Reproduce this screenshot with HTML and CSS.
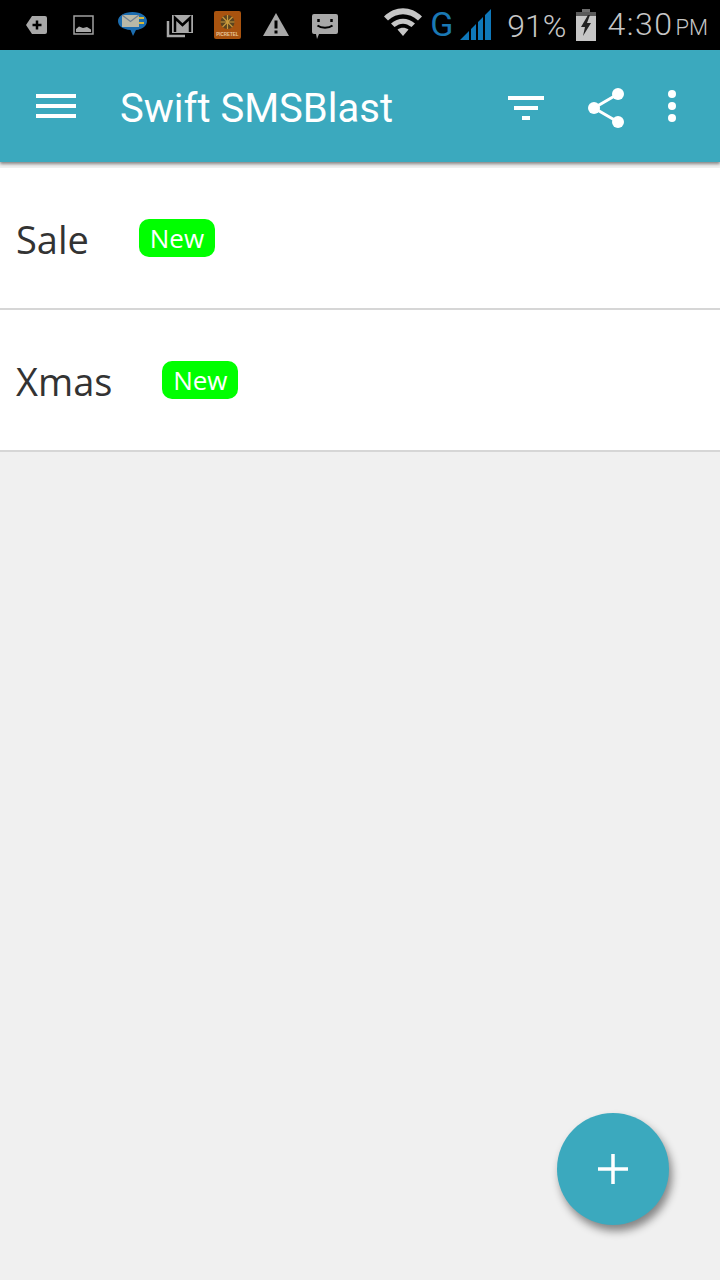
FILE: index.html
```html
<!DOCTYPE html>
<html lang="en">
<head>
    <meta charset="UTF-8">
    <meta name="viewport" content="width=device-width, initial-scale=1.0">
    <title>Swift SMSBlast</title>
    <link rel="stylesheet" href="styles.css">
</head>
<body>
    <div class="phone">
        <div class="status-bar">
            <div class="notifications">
                <svg class="note" viewBox="0 0 32 32">
                    <path d="M12 7H25a2 2 0 0 1 2 2V23a2 2 0 0 1-2 2H12L6 16Z" fill="#a8a8a8"/>
                    <path d="M17 11.500V20.500M12.500 16H21.500" stroke="#000" stroke-width="2.500"/>
                </svg>
                <svg class="note" viewBox="0 0 32 32">
                    <rect x="6" y="7" width="19" height="18" fill="none" stroke="#a0a0a0" stroke-width="1.500"/>
                    <path d="M8 23V20L11 17.500L15 19L19 18L23 20.500V23Z" fill="#a8a8a8"/>
                </svg>
                <svg class="note" viewBox="0 0 32 32">
                    <path d="M17 27L14.500 21C7 20.500 2 17 2 12C2 7 8 3 16.500 3C25 3 31 7 31 12C31 17 26 20.500 20 21Z" fill="#1c6db0"/>
                    <rect x="6" y="6" width="17" height="12" fill="#b9b9a8"/>
                    <path d="M6 6L14.500 12.500L23 6" fill="none" stroke="#6f7f90" stroke-width="1.200"/>
                    <path d="M23 9H28M23 14H28" stroke="#d8b93a" stroke-width="2"/>
                </svg>
                <svg class="note" viewBox="0 0 32 32">
                    <path d="M4 12V27H21" fill="none" stroke="#a8a8a8" stroke-width="2.500"/>
                    <rect x="8" y="6" width="21" height="18" fill="#a8a8a8"/>
                    <path d="M11 23V9L18.500 16L26 9V23" fill="none" stroke="#000" stroke-width="2.500"/>
                </svg>
                <svg class="note" viewBox="0 0 32 32">
                    <rect x="2" y="2" width="27" height="28" rx="2" fill="#a8530f"/>
                    <circle cx="15.500" cy="13" r="7" fill="#5a4420"/>
                    <path d="M15.500 6V20M8.500 13H22.500M10.500 8L20.500 18M20.500 8L10.500 18" stroke="#c99a3c" stroke-width="1.200"/>
                    <text class="note-brand" x="15.500" y="27" text-anchor="middle">PICRETEL</text>
                </svg>
                <svg class="note" viewBox="0 0 32 32">
                    <path d="M16 4L29 27H3Z" fill="#a8a8a8"/>
                    <path d="M16 11.500V19.500M16 21.500V24.500" stroke="#000" stroke-width="3"/>
                </svg>
                <svg class="note" viewBox="0 0 32 32">
                    <path d="M6 5H28a2 2 0 0 1 2 2V23a2 2 0 0 1-2 2H11L9 30L8 25H6a2 2 0 0 1-2-2V7A2 2 0 0 1 6 5Z" fill="#a8a8a8"/>
                    <path d="M10.500 10V13M23.500 10V13" stroke="#000" stroke-width="2.500"/>
                    <path d="M9.500 16.500C13 19.500 21 19.500 24.500 16.500" fill="none" stroke="#000" stroke-width="2"/>
                </svg>
            </div>
            <div class="system">
                <svg class="wifi" viewBox="0 0 40 30">
                    <path d="M1 9.500C12 -1.500 28 -1.500 39 9.500L35 13.500C26 5 14 5 5 13.500Z" fill="#c6c6c6"/>
                    <path d="M8 16.500C15 10 25 10 32 16.500L28.500 20C22.500 15.500 17.500 15.500 11.500 20Z" fill="#c6c6c6"/>
                    <path d="M14.500 22.500C18 20 22 20 25.500 22.500L20 29Z" fill="#c6c6c6"/>
                </svg>
                <span class="net">G</span>
                <svg class="signal" viewBox="0 0 32 31">
                    <path d="M0 31L9 22V31ZM11 31V20L16 15V31ZM18 31V13L23 8V31ZM25 31V6L31 0V31Z" fill="#0f78ba"/>
                </svg>
                <span class="percent">91%</span>
                <svg class="battery" viewBox="0 0 20 32">
                    <rect x="6" y="0" width="8" height="3" fill="#6e6e6e"/>
                    <rect x="0" y="3" width="20" height="7" fill="#5a5a5a"/>
                    <rect x="0" y="7" width="20" height="25" fill="#c6c6c6"/>
                    <path d="M12 6L5 18H9L7 27L15 14H11L14 6Z" fill="#222"/>
                </svg>
                <span class="clock">4:30<small>PM</small></span>
            </div>
        </div>

        <header class="app-bar">
            <svg class="menu-icon" viewBox="0 0 40 24">
                <path d="M0 2H40M0 12H40M0 22H40" stroke="#fff" stroke-width="4"/>
            </svg>
            <div class="title">Swift SMSBlast</div>
            <div class="actions">
                <svg class="action" viewBox="0 0 36 36">
                    <path d="M0 10H36M6 20H30M14 30H22" stroke="#fff" stroke-width="4"/>
                </svg>
                <svg class="action" viewBox="0 0 36 36">
                    <path d="M30 6L6 20L30 34" fill="none" stroke="#fff" stroke-width="3"/>
                    <circle cx="30" cy="6" r="6" fill="#fff"/>
                    <circle cx="6" cy="20" r="6" fill="#fff"/>
                    <circle cx="30" cy="34" r="6" fill="#fff"/>
                </svg>
                <svg class="action-dots" viewBox="0 0 8 36">
                    <circle cx="4" cy="6" r="4" fill="#fff"/>
                    <circle cx="4" cy="18" r="4" fill="#fff"/>
                    <circle cx="4" cy="30" r="4" fill="#fff"/>
                </svg>
            </div>
        </header>

        <div class="list">
            <div class="row">
                <span class="row-name">Sale</span>
                <span class="badge">New</span>
            </div>
            <div class="row">
                <span class="row-name">Xmas</span>
                <span class="badge">New</span>
            </div>
        </div>

        <div class="fab">
            <svg class="fab-icon" viewBox="0 0 30 30">
                <path d="M15 0V30M0 15H30" stroke="#fff" stroke-width="3.500"/>
            </svg>
        </div>
    </div>
</body>
</html>
```

FILE: styles.css
```css
body {
    margin: 0;
    background-color: #f0f0f0;
    font-family: Roboto, sans-serif;
}

.phone {
    width: 720px;
    height: 1280px;
    position: relative;
    overflow: hidden;
    background-color: #f0f0f0;
}

/* status bar */
.status-bar {
    height: 50px;
    background-color: #000;
    display: flex;
    justify-content: space-between;
    align-items: center;
    padding: 0 12px;
    box-sizing: border-box;
}

.notifications {
    display: flex;
    align-items: center;
}

.note {
    width: 32px;
    height: 32px;
    padding: 0 8px;
}

.note-brand {
    font-family: "Liberation Sans", sans-serif;
    font-size: 4.500px;
    font-weight: 700;
    fill: #e8c9a0;
}

.system {
    display: flex;
    align-items: center;
    color: #c6c6c6;
    font-weight: 300;
    font-size: 32px;
    line-height: 50px;
}

.wifi {
    width: 40px;
    height: 30px;
    margin-right: 7px;
    margin-top: -6px;
}

.net {
    color: #1a78b4;
    font-size: 34px;
    font-weight: 400;
    width: 22px;
    margin-right: 8px;
    margin-top: -2px;
}

.signal {
    width: 32px;
    height: 31px;
    margin-right: 15px;
    margin-top: -2px;
}

.percent {
    margin-right: 10px;
    margin-top: 2px;
}

.battery {
    width: 20px;
    height: 32px;
    margin-right: 11px;
    margin-top: -1px;
}

.clock {
    margin-top: 2px;
    letter-spacing: 1.500px;
}

.clock small {
    font-size: 22px;
    margin-left: 2px;
    letter-spacing: 0;
}

/* app bar */
.app-bar {
    height: 112px;
    background-color: #3ba9be;
    box-shadow: 0 2px 3px rgba(0, 0, 0, 0.45);
    display: flex;
    align-items: center;
    padding: 0 44px 0 36px;
    position: relative;
}

.menu-icon {
    width: 40px;
    height: 24px;
    margin-right: 44px;
}

.title {
    color: #fff;
    font-size: 40px;
    flex: 1;
    margin-top: 4px;
}

.actions {
    display: flex;
    align-items: flex-start;
    gap: 44px;
}

.action {
    width: 36px;
    height: 36px;
    overflow: visible;
}

.action-dots {
    width: 8px;
    height: 36px;
}

/* list */
.list {
    padding-top: 6px;
}

.row {
    height: 140px;
    background-color: #fff;
    border-bottom: 2px solid #d6d6d6;
    display: flex;
    align-items: center;
    gap: 50px;
    padding-left: 16px;
}

.row-name {
    color: #333;
    font-family: "Open Sans", sans-serif;
    font-size: 38px;
    margin-top: 2px;
}

.badge {
    background-color: #00ff00;
    color: #fff;
    font-family: "Open Sans", sans-serif;
    font-size: 26px;
    line-height: 38px;
    width: 76px;
    text-align: center;
    border-radius: 10px;
}

/* add button */
.fab {
    position: absolute;
    right: 51px;
    bottom: 55px;
    width: 112px;
    height: 112px;
    border-radius: 50%;
    background-color: #3ba9be;
    box-shadow: 3px 6px 8px rgba(0, 0, 0, 0.45);
    display: flex;
    align-items: center;
    justify-content: center;
}

.fab-icon {
    width: 30px;
    height: 30px;
}
```
